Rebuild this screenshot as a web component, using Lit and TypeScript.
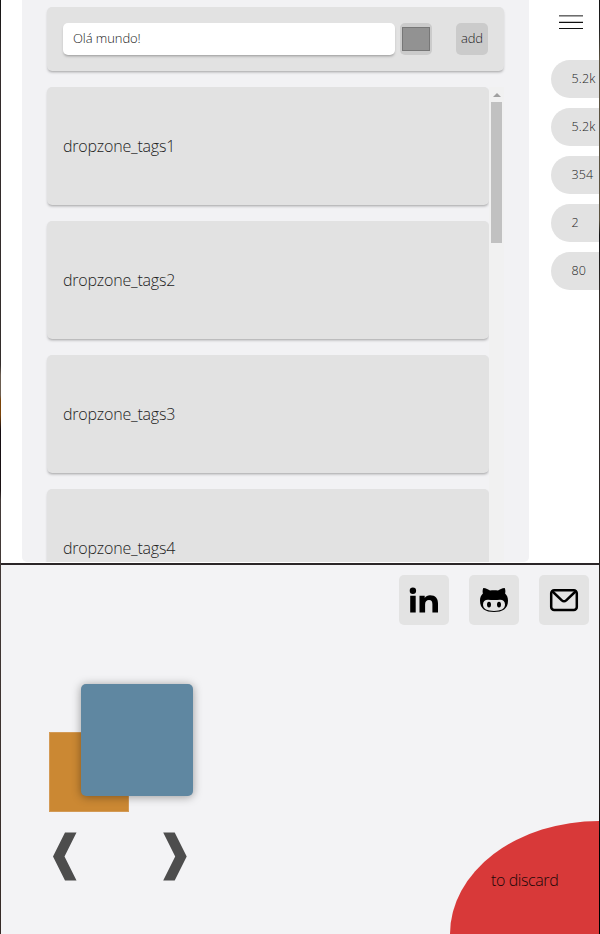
import { LitElement, html, css, svg } from "lit";
import { customElement } from "lit/decorators.js";

const zones = ["dropzone_tags1", "dropzone_tags2", "dropzone_tags3", "dropzone_tags4"];
const counts = ["5.2k", "5.2k", "354", "2", "80"];

const icons = [
  svg`<circle cx="13.900" cy="15.800" r="3.200"/><path d="M11.200 20.700h5.500v16.800h-5.500z M20.500 20.700h5.200V23c1.200-1.900 3-2.800 5.300-2.800 5.600 0 8 3.200 8 8.300v9h-5.600v-8.300c0-2.700-.9-4.200-3.400-4.200s-3.900 1.700-3.900 4.400v8.100h-5.600z"/>`,
  svg`<path fill-rule="evenodd" d="M14.3 13c2.8.2 5 1.400 6.700 2.500 2.500-.5 5.500-.5 8 0C30.700 14.400 32.900 13.200 35.700 13c.9 2.100.8 4 .4 5.500C38 20.400 39 22.500 39 25.500 39 34 33.500 37 25 37S11 34 11 25.500c0-3 1-5.100 2.900-7-.4-1.500-.5-3.400.4-5.500z M19 24.700c-3.200 0-5 1.900-5 4.900 0 4.700 4.200 6.300 11 6.300s11-1.600 11-6.300c0-3-1.800-4.900-5-4.900-2 0-3.800.4-6 .4s-4-.4-6-.4z"/><ellipse cx="20" cy="29.600" rx="2" ry="2.900"/><ellipse cx="30" cy="29.600" rx="2" ry="2.900"/>`,
  svg`<rect x="12.200" y="15.200" width="25.600" height="19.800" rx="3" fill="none" stroke="#000" stroke-width="2.500"/><path d="M13 16l9.800 9.300c1.300 1.200 3.100 1.200 4.400 0L37 16" fill="none" stroke="#000" stroke-width="2.500"/>`,
];

@customElement("app-root")
export class AppRoot extends LitElement {
  static styles = css`
    :host { display: block; width: 600px; height: 934px; box-sizing: border-box; overflow: hidden; padding: 0 1px;
      font: 300 16px "Open Sans", "Noto Sans", sans-serif; color: #222;
      background:
        linear-gradient(#111, #332b2b 60px, #332d2b 365px, #6b5d50 375px, #6b5d50 395px, #7a4308 400px, #7a4308 415px, #140c12 430px, #1a1214 490px, #443b39 500px, #352a26 934px) left / 1px 100% no-repeat,
        linear-gradient(#111, #222 30px, #5c5340 60px, #5c5340 220px, #111 235px, #332e2b 300px, #1c1a1a 800px, #000 840px) right / 1px 100% no-repeat,
        #f3f3f5; }
    * { box-sizing: border-box; }
    .top { height: 565px; display: flex; align-items: flex-start; background: #fff; border-bottom: 2px solid #2b2628; overflow: hidden; }
    .panel { width: 507px; height: 562px; margin-left: 21px; padding: 7px 25px 0; background: #f2f2f4;
      border-radius: 0 0 5px 5px; overflow: hidden; display: flex; flex-direction: column; gap: 16px; }
    .form { height: 64px; flex: none; padding: 16px; display: flex; background: #e2e2e2; border-radius: 5px;
      box-shadow: 0 2px 3px -1px rgba(0,0,0,.35); font-size: 13px; line-height: 31px; }
    .field { width: 332px; height: 32px; padding-left: 10px; background: #fff; border-radius: 5px; box-shadow: 0 2px 3px -1px rgba(0,0,0,.35); }
    .field span { letter-spacing: -.08px; }
    .swatch { width: 32px; height: 32px; margin-left: 5px; padding: 4px 2px; border-radius: 5px; background: #cbcbcb; }
    .swatch i { display: block; height: 24px; background: #929292; border: 1px solid #777; }
    .add { width: 32px; height: 32px; margin-left: 24px; border-radius: 5px; background: #cbcbcb; text-align: center; letter-spacing: -.2px; }
    .scroller { flex: 1; min-height: 0; display: flex; margin-left: -4px; padding-left: 4px; overflow: hidden; }
    .zones { width: 442px; flex: none; display: flex; flex-direction: column; gap: 16px; }
    .zone { height: 118px; flex: none; padding: 0 0 1px 16px; display: flex; align-items: center; background: #e2e2e2;
      border-radius: 5px; box-shadow: 0 2px 3px -1px rgba(0,0,0,.35); letter-spacing: -.2px; }
    .track { width: 15px; flex: none; padding: 6px 2px 0; background: #f1f1f1; display: flex; flex-direction: column; align-items: center; gap: 5px; }
    .arrow { border: 4px solid transparent; border-top: 0; border-bottom-color: #a0a0a0; }
    .thumb { width: 11px; height: 141px; background: #c1c1c1; }
    .side { width: 70px; flex: none; padding: 15px 0 0 22px; display: flex; flex-direction: column; gap: 10px; }
    .menu { width: 24px; height: 35px; margin-left: 8px; }
    .pill { width: 60px; height: 38px; padding-left: 20.500px; border-radius: 19px 0 0 19px; background: #e2e2e2;
      font-size: 12.500px; line-height: 37px; letter-spacing: .15px; }
    .bottom { height: 369px; display: grid; grid-template-rows: 60px 1fr; overflow: hidden; }
    .links { padding: 10px 10px 0; display: flex; justify-content: flex-end; gap: 20px; }
    .link { width: 50px; height: 50px; border-radius: 5px; background: #e3e3e3; }
    .link svg, .menu svg { display: block; }
    .play { display: flex; justify-content: space-between; }
    .picker { width: 144px; padding-top: 59px; margin-left: 48px; }
    .colors { position: relative; height: 128px; }
    .next { position: absolute; left: 0; top: 48px; width: 80px; height: 80px; background: #cb8833; border: 1px solid #d39a55; }
    .current { position: absolute; left: 32px; top: 0; width: 112px; height: 112px; background: #5f87a1; border-radius: 5px; box-shadow: 0 1px 10px rgba(0,0,0,.38); }
    .nav { margin-top: 20px; display: flex; justify-content: space-between; padding: 0 6px 0 4px; }
    .discard { width: 149px; height: 113px; align-self: flex-end; padding: 4px 0 0 41px; display: flex; align-items: center;
      background: #d83939; border-radius: 100% 0 0 0; color: #200808; letter-spacing: -.4px; }
  `;

  render() {
    return html`
      <div class="top">
        <main class="panel">
          <div class="form">
            <div class="field"><span>Olá mundo!</span></div>
            <div class="swatch"><i></i></div>
            <div class="add">add</div>
          </div>
          <div class="scroller">
            <div class="zones">${zones.map((z) => html`<div class="zone"><span>${z}</span></div>`)}</div>
            <div class="track"><div class="arrow"></div><div class="thumb"></div></div>
          </div>
        </main>
        <aside class="side">
          <div class="menu"><svg width="24" height="16"><path d="M0 .8h24" stroke="#666" stroke-width="1.500"/><path d="M0 7.400h24M0 13.500h24" stroke="#111" stroke-width="1.200"/></svg></div>
          ${counts.map((c) => html`<div class="pill"><span>${c}</span></div>`)}
        </aside>
      </div>
      <div class="bottom">
        <nav class="links">${icons.map((i) => html`<div class="link"><svg width="50" height="50">${i}</svg></div>`)}</nav>
        <div class="play">
          <div class="picker">
            <div class="colors"><div class="next"></div><div class="current"></div></div>
            <div class="nav">
              <svg width="24" height="49"><path d="M12 .5h11.500L11.500 24.500l12 24H12L0 24.500z" fill="#4d4d4d"/></svg>
              <svg width="24" height="49"><path d="M.2.5h11.500l12 24-12 24H.2l12-24z" fill="#4d4d4d"/></svg>
            </div>
          </div>
          <div class="discard"><span>to discard</span></div>
        </div>
      </div>`;
  }
}
